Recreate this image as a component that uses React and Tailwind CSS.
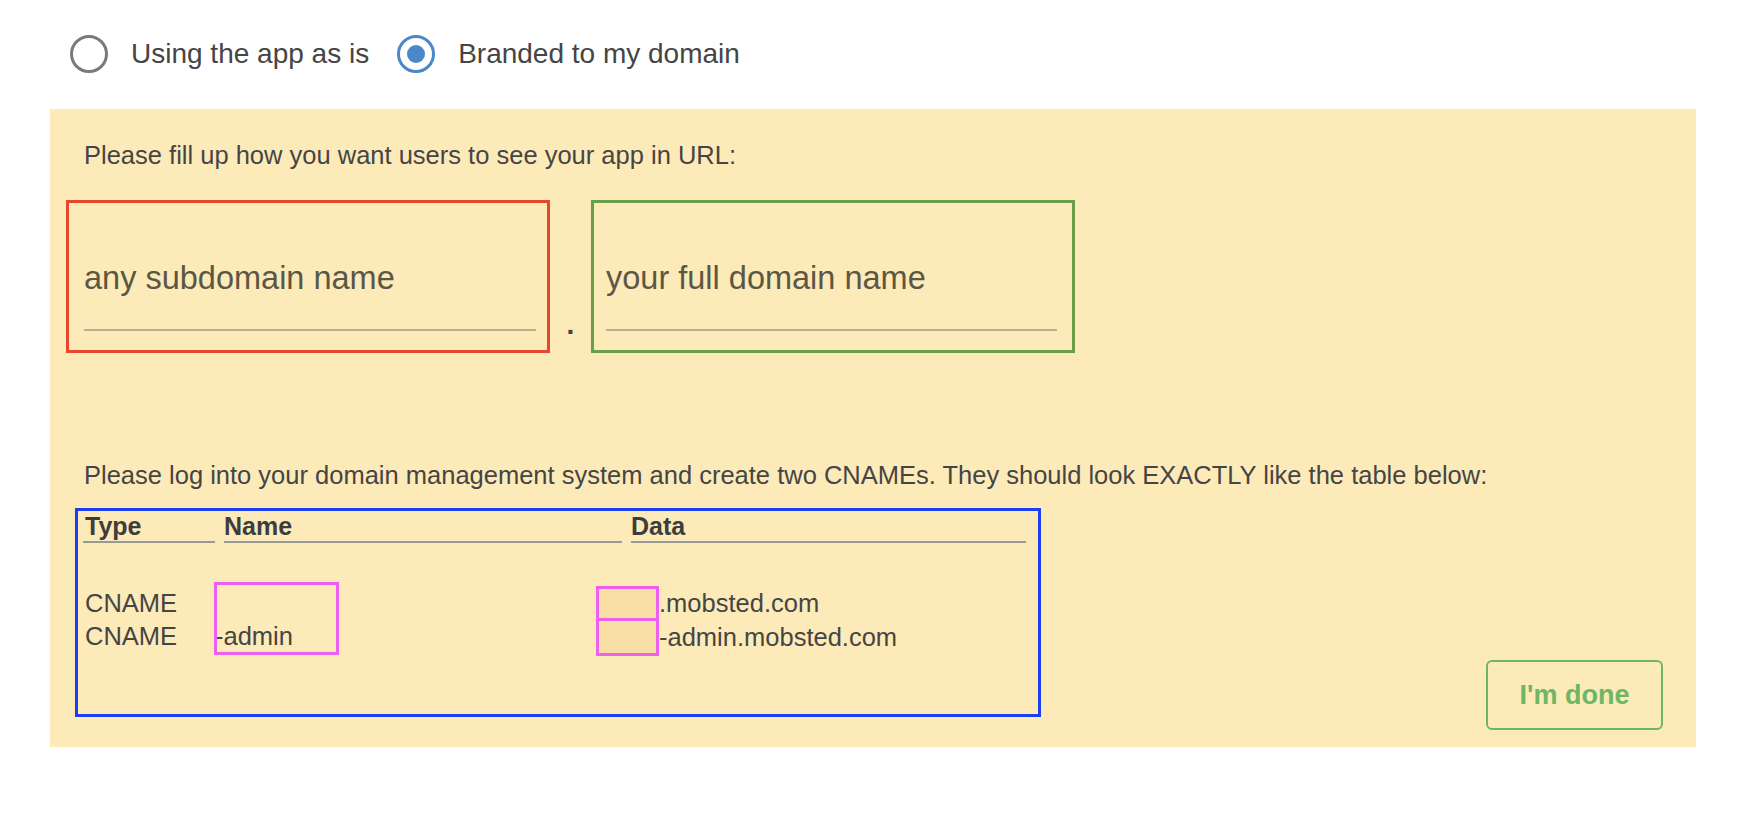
import React from "react";

function Radio({ checked, label }) {
  return (
    <label className="flex items-center gap-[23px] cursor-pointer">
      <span
        className={
          "flex h-[38px] w-[38px] items-center justify-center rounded-full border-[3px] " +
          (checked ? "border-[#4b88c9]" : "border-[#7a7a7a]")
        }
      >
        {checked && <span className="h-[18px] w-[18px] rounded-full bg-[#4b88c9]" />}
      </span>
      <span className="text-[28px] leading-[34px] text-[#454545]">{label}</span>
    </label>
  );
}

function FieldBox({ className, placeholder }) {
  return (
    <div className={"border-[3px] pt-[24px] pb-[19px] " + className}>
      <input
        className="block h-[104px] w-full border-b-2 border-[#b8ae90] bg-transparent text-[32.5px] text-[#5b5744] outline-none placeholder:text-[#5b5744]"
        placeholder={placeholder}
      />
    </div>
  );
}

export default function App() {
  return (
    <div className="min-h-[816px] bg-white font-['Liberation_Sans',Arial,sans-serif] text-[#454545]">
      <div className="flex items-center gap-[28px] pl-[70px] pt-[35px]">
        <Radio checked={false} label="Using the app as is" />
        <Radio checked={true} label="Branded to my domain" />
      </div>

      <div className="ml-[50px] mt-[36px] w-[1646px] bg-[#fdeab9] pl-[16px] pr-[33px] pt-[31px] pb-[17px]">
        <p className="pl-[18px] text-[25.5px] leading-[31px]">
          Please fill up how you want users to see your app in URL:
        </p>

        <div className="mt-[29px] flex items-end">
          <FieldBox
            className="w-[484px] border-[#e8472b] pl-[15px] pr-[11px]"
            placeholder="any subdomain name"
          />
          <span className="w-[41px] pb-[14px] text-center text-[28px] font-bold leading-[28px] text-[#454545]">.</span>
          <FieldBox
            className="w-[484px] border-[#6c9d48] pl-[12px] pr-[15px]"
            placeholder="your full domain name"
          />
        </div>

        <p className="mt-[107px] pl-[18px] text-[25.5px] leading-[31px]">
          Please log into your domain management system and create two CNAMEs. They should look EXACTLY like the table below:
        </p>

        <div className="mt-[17px] flex items-end justify-between">
          <div className="mb-[13px] ml-[9px] w-[966px] border-[3px] border-[#1d3ef0] pl-[5px] pr-[12px] pb-[60px]">
            <div className="grid grid-cols-[132px_398px_395px] gap-x-[9px] text-[25px] font-bold leading-[30px] text-[#3d3d3d]">
              <div className="border-b-2 border-[#999] pl-[2px]">Type</div>
              <div className="border-b-2 border-[#999]">Name</div>
              <div className="border-b-2 border-[#999]">Data</div>
            </div>

            <div className="relative mt-[44px] grid grid-cols-[131px_382px_1fr] text-[25.5px] leading-[33px]">
              <div className="pl-[2px]">CNAME</div>
              <div className="relative">
                <span className="pointer-events-none absolute left-0 top-[-5px] h-[73px] w-[125px] border-[3px] border-[#ee5ff0]" />
              </div>
              <div className="flex items-center">
                <span className="-my-[2px] h-[36px] w-[63px] border-[3px] border-[#ee5ff0] bg-[#f9dfa6]" />
                <span>.mobsted.com</span>
              </div>

              <div className="pl-[2px]">CNAME</div>
              <div className="pl-[1px]">-admin</div>
              <div className="flex items-center">
                <span className="-my-[2px] h-[38px] w-[63px] border-[3px] border-[#ee5ff0] bg-[#f9dfa6]" />
                <span>-admin.mobsted.com</span>
              </div>
            </div>
          </div>

          <button className="h-[70px] w-[177px] rounded-[6px] border-2 border-[#6db664] text-[27px] font-bold text-[#6db664]">
            I'm done
          </button>
        </div>
      </div>
    </div>
  );
}
